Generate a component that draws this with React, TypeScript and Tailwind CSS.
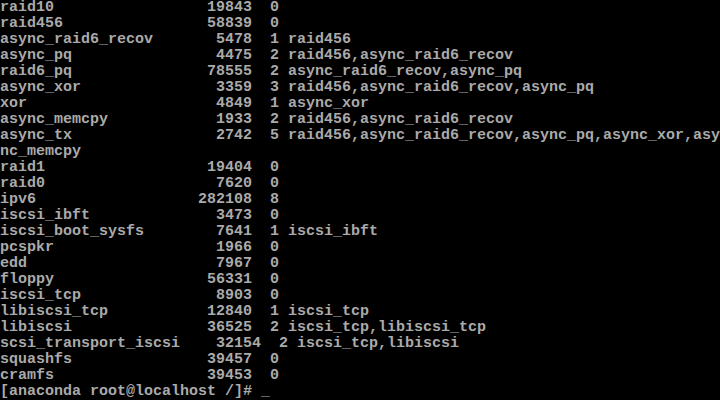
import React from "react";

const lines = [
  "raid10                 19843  0",
  "raid456                58839  0",
  "async_raid6_recov       5478  1 raid456",
  "async_pq                4475  2 raid456,async_raid6_recov",
  "raid6_pq               78555  2 async_raid6_recov,async_pq",
  "async_xor               3359  3 raid456,async_raid6_recov,async_pq",
  "xor                     4849  1 async_xor",
  "async_memcpy            1933  2 raid456,async_raid6_recov",
  "async_tx                2742  5 raid456,async_raid6_recov,async_pq,async_xor,asy",
  "nc_memcpy",
  "raid1                  19404  0",
  "raid0                   7620  0",
  "ipv6                  282108  8",
  "iscsi_ibft              3473  0",
  "iscsi_boot_sysfs        7641  1 iscsi_ibft",
  "pcspkr                  1966  0",
  "edd                     7967  0",
  "floppy                 56331  0",
  "iscsi_tcp               8903  0",
  "libiscsi_tcp           12840  1 iscsi_tcp",
  "libiscsi               36525  2 iscsi_tcp,libiscsi_tcp",
  "scsi_transport_iscsi    32154  2 iscsi_tcp,libiscsi",
  "squashfs               39457  0",
  "cramfs                 39453  0",
  "[anaconda root@localhost /]# _",
];

export default function App() {
  return (
    <div className="w-[720px] h-[400px] bg-black overflow-hidden">
      <div className="font-['Liberation_Mono',monospace] text-[15px] font-bold leading-[16px] text-[#aaaaaa] whitespace-pre">
        {lines.map((line, i) => (
          <div key={i} className="h-[16px]">
            {line}
          </div>
        ))}
      </div>
    </div>
  );
}
